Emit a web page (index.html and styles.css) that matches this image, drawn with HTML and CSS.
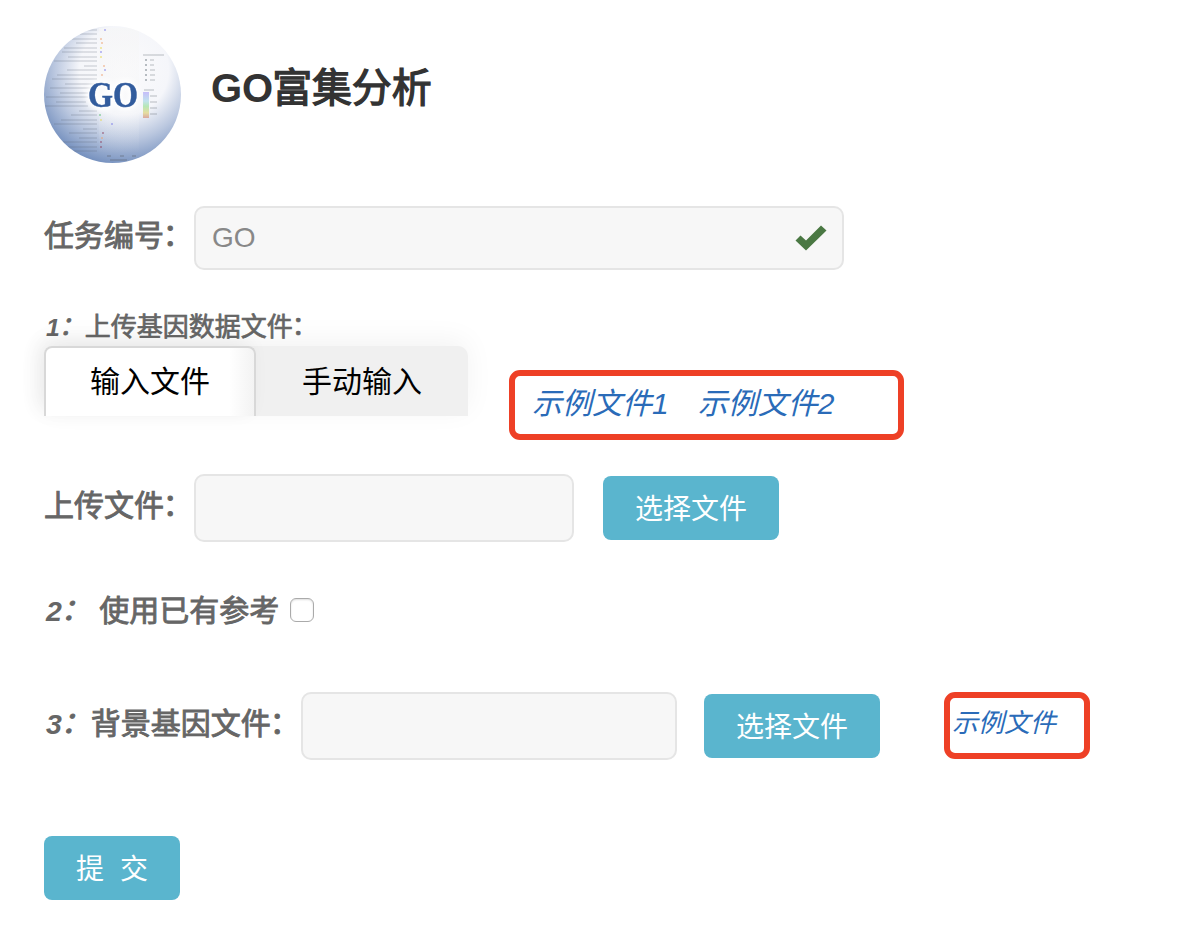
FILE: index.html
```html
<!DOCTYPE html>
<html lang="zh-CN">
<head>
<meta charset="utf-8">
<title>GO富集分析</title>
<link rel="stylesheet" href="styles.css">
</head>
<body>
<main class="page">
  <header class="header">
    <svg class="logo" viewBox="0 0 137 137" aria-hidden="true">
      <defs>
        <radialGradient id="ball" cx="80" cy="44" r="104" gradientUnits="userSpaceOnUse">
          <stop offset="0" stop-color="#fbfbfc"/>
          <stop offset=".43" stop-color="#f5f6fa"/>
          <stop offset=".67" stop-color="#bac7df"/>
          <stop offset="1" stop-color="#5f7fb4"/>
        </radialGradient>
        <clipPath id="round"><circle cx="68.500" cy="68.500" r="68.500"/></clipPath>
        <filter id="glow" x="-30%" y="-30%" width="160%" height="160%"><feGaussianBlur stdDeviation="2.500"/></filter>
        <filter id="soft" x="-10%" y="-10%" width="120%" height="120%"><feGaussianBlur stdDeviation=".65"/></filter>
        <filter id="edge" x="-10%" y="-10%" width="120%" height="120%"><feGaussianBlur stdDeviation=".4"/></filter>
        <linearGradient id="scale" x1="0" y1="0" x2="0" y2="1">
          <stop offset="0" stop-color="#c6bdfa"/><stop offset=".35" stop-color="#c1e3ed"/>
          <stop offset=".55" stop-color="#b6e7b5"/><stop offset=".8" stop-color="#e5dda0"/>
          <stop offset="1" stop-color="#d9a7a0"/>
        </linearGradient>
        <linearGradient id="panel" x1="0" y1="0" x2="0" y2="1">
          <stop offset="0" stop-color="#f6f6f6" stop-opacity=".6"/><stop offset="1" stop-color="#f6f6f6" stop-opacity="0"/>
        </linearGradient>
      </defs>
      <g clip-path="url(#round)">
        <rect width="137" height="137" fill="url(#ball)"/>
        <rect x="55" y="2" width="40" height="125" fill="url(#panel)"/>
        <g filter="url(#soft)">
          <path d="M41 4H53M36 8H53M28 13H53M32 17H53M20 22H53M18 26H53M24 31H53M10 35H53M40 40H53M23 44H53M13 49H53M8 53H53M21 58H53M6 62H53M16 67H44M2 71H44M12 76H42M1 80H44M35 85H53M27 89H53M17 94H53M10 98H53M39 103H53M25 107H53M35 112H53M17 116H53M18 121H53M27 125H53" stroke="#596575" stroke-width="1.800" opacity=".16" fill="none"/>
          <g opacity=".45">
            <path d="M56 13h2M57 17h2M57 49h2M59 40h2M57 112h2" stroke="#ed9f6c" stroke-width="2"/>
            <path d="M56 22h2M56 31h2M56 94h2" stroke="#e6d84b" stroke-width="2"/>
            <path d="M56 26h2M60 44h2M60 4h2M67 98h2" stroke="#7676e8" stroke-width="2"/>
            <path d="M55 89h2" stroke="#54bb6d" stroke-width="2"/>
            <path d="M58 107h2M56 116h2M56 121h2" stroke="#8f3e61" stroke-width="2"/>
          </g>
          <g stroke="#56616d" stroke-width="2" opacity=".4">
            <path d="M101 34h2M101 39h2M101 44h2M101 49h2M101 54h2"/>
            <path d="M106 34h4M106 39h4M106 44h5M106 49h5M106 54h5M99 29h21M100 64h10M106 70h7M106 76h7M106 82h7M106 88h7" opacity=".5"/>
            <path d="M63 130h4M76 130h4M88 130h4M66 134h17" opacity=".7"/>
          </g>
          <rect x="99" y="66" width="6" height="26" fill="url(#scale)"/>
        </g>
        <text class="logo-text logo-glow" x="69" y="80.500" text-anchor="middle" textLength="50" lengthAdjust="spacingAndGlyphs" filter="url(#glow)">GO</text>
        <text class="logo-text logo-name" x="69" y="80.500" text-anchor="middle" textLength="50" lengthAdjust="spacingAndGlyphs" filter="url(#edge)">GO</text>
      </g>
    </svg>
    <h1 class="title">GO<span>富集分析</span></h1>
  </header>

  <div class="row task-row">
    <label class="label task-label">任务编号<span class="colon">：</span></label>
    <div class="field task-field">
      <span>GO</span>
      <svg class="check" viewBox="0 0 32 26" aria-hidden="true"><path d="M.5 15.500 5.500 10.500 11 15.500 26 .5 31.500 5.500 11 25.500Z" fill="#4a7843"/></svg>
    </div>
  </div>

  <div class="label data-label"><i><b>1</b><span class="colon">：</span></i>上传基因数据文件<span class="colon">：</span></div>
  <div class="source-row">
    <div class="tabs">
      <div class="tab tab-active">输入文件</div>
      <div class="tab">手动输入</div>
    </div>
    <div class="marked samples">
      <a class="link">示例文件1</a>
      <a class="link">示例文件2</a>
    </div>
  </div>

  <div class="row upload-row">
    <label class="label task-label">上传文件<span class="colon">：</span></label>
    <div class="field upload-field"></div>
    <div class="button upload-button">选择文件</div>
  </div>

  <div class="row reference-row">
    <label class="label"><i><b>2</b><span class="colon">：</span></i> 使用已有参考</label>
    <span class="checkbox"></span>
  </div>

  <div class="row background-row">
    <label class="label background-label"><i><b>3</b><span class="colon">：</span></i>背景基因文件<span class="colon">：</span></label>
    <div class="field background-field"></div>
    <div class="button background-button">选择文件</div>
    <div class="marked sample"><a class="link">示例文件</a></div>
  </div>

  <div class="button submit"><span>提</span><span>交</span></div>
</main>
</body>
</html>
```
FILE: styles.css
```css
* { box-sizing: border-box; }
body {
  margin: 0;
  background: #fff;
  font-family: "Liberation Sans", "Noto Sans CJK SC", sans-serif;
}
.page {
  width: 1186px;
  height: 940px;
  padding: 26px 0 0 44px;
  overflow: hidden;
}
.header { display: flex; height: 137px; }
.logo { width: 137px; height: 137px; flex: none; }
.logo-text {
  font: bold 36px "Liberation Serif", serif;
  fill: #315b9d;
}
.logo-name { stroke: #315b9d; stroke-width: .5px; }
.logo-glow { stroke: #fff; stroke-width: 6px; fill: #fff; }
.title {
  margin: 32px 0 0 30px;
  color: #333;
  font-size: 40px;
  line-height: 60px;
  font-weight: bold;
  white-space: nowrap;
}
.title span {
  margin-left: -1px;
  font-weight: normal;
  letter-spacing: -.2px;
  -webkit-text-stroke: 1.3px #333;
}
.row { display: flex; }
.label {
  color: #666;
  font-size: 30px;
  line-height: 44px;
  white-space: nowrap;
  flex: none;
  -webkit-text-stroke: .9px #666;
}
.label b {
  display: inline-block;
  padding-left: 2px;
  margin-right: -1px;
  font-size: .95em;
  -webkit-text-stroke: 0;
}
.colon {
  display: inline-block;
  transform: translate(-.04em, -.03em);
}
.label i .colon { transform: translate(0, -.05em); }
.field {
  display: flex;
  align-items: center;
  flex: none;
  border: 2px solid #e5e5e5;
  border-radius: 10px;
  background: #f7f7f7;
  color: #888;
}
.task-row { margin-top: 43px; height: 64px; }
.task-label { width: 150px; margin-top: 8px; }
.task-field {
  width: 650px;
  height: 64px;
  padding: 0 15px 0 16px;
  justify-content: space-between;
  font-size: 28px;
}
.check { width: 32px; height: 26px; }
.data-label {
  height: 39px;
  margin-top: 37px;
  font-size: 26px;
  line-height: 40px;
  -webkit-text-stroke-width: .7px;
}
.source-row { display: flex; height: 94px; }
.tabs {
  display: flex;
  width: 424px;
  height: 70px;
  border-radius: 10px 10px 0 0;
  background: #f0f0f0;
  box-shadow: 0 -6px 28px rgba(0, 0, 0, .05);
}
.tab {
  width: 212px;
  font-size: 30px;
  line-height: 72px;
  text-align: center;
  color: #000;
}
.tab-active {
  border: 2px solid #d8d8d8;
  border-bottom: 0;
  border-radius: 8px 8px 0 0;
  background: linear-gradient(to right, #fff 88%, #f3f3f3);
  box-shadow: -6px -5px 20px rgba(0, 0, 0, .06);
  line-height: 68px;
}
.marked {
  display: flex;
  border: 6px solid #ee4026;
  border-radius: 11px;
  background: #fff;
  flex: none;
}
.link {
  color: #2a6bb8;
  font-style: italic;
  white-space: nowrap;
}
.samples {
  width: 395px;
  height: 70px;
  margin: 24px 0 0 41px;
  padding-left: 17px;
  gap: 29px;
  font-size: 30px;
  line-height: 56px;
}
.upload-row { margin-top: 34px; height: 68px; }
.upload-row .task-label { margin-top: 10px; }
.upload-field { width: 380px; height: 68px; }
.button {
  display: flex;
  align-items: center;
  justify-content: center;
  flex: none;
  width: 176px;
  height: 64px;
  padding-bottom: 2px;
  border-radius: 8px;
  background: #5ab5ce;
  color: #fff;
  font-size: 28px;
}
.upload-button { margin: 2px 0 0 29px; }
.reference-row { height: 44px; margin-top: 47px; }
.checkbox {
  width: 24px;
  height: 24px;
  margin: 9px 0 0 11px;
  border: 1px solid #aaa;
  border-radius: 6px;
  box-shadow: inset 0 1px 2px #ddd;
}
.background-row { height: 68px; margin-top: 59px; }
.background-label { width: 257px; margin-top: 10px; }
.background-field { width: 376px; height: 68px; }
.background-button { margin: 2px 0 0 27px; }
.sample {
  width: 146px;
  height: 67px;
  margin-left: 64px;
  padding-left: 2px;
  font-size: 26px;
  line-height: 50px;
}
.submit {
  width: 136px;
  margin-top: 76px;
  gap: 16px;
}
```
